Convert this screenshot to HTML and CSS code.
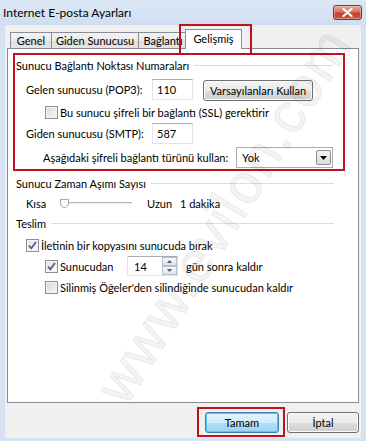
FILE: index.html
```html
<!DOCTYPE html>
<html lang="tr">
<head>
    <meta charset="UTF-8">
    <title>Internet E-posta Ayarları</title>
    <link rel="stylesheet" href="styles.css">
</head>
<body>
    <div class="window">
        <div class="titlebar">
            <span class="title">Internet E-posta Ayarları</span>
            <span class="close">
                <svg width="11" height="9" viewBox="0 0 11 9"><path d="M1.5 1 L9.5 8 M9.5 1 L1.5 8" stroke="#fff" stroke-width="2.2" stroke-linecap="round"/></svg>
            </span>
        </div>

        <div class="client">
            <!-- tab strip -->
            <div class="tabs">
                <div class="tab w-genel">Genel</div>
                <div class="tab w-giden">Giden Sunucusu</div>
                <div class="tab w-baglanti">Bağlantı</div>
                <div class="tab active">Gelişmiş<span class="mark mark-tab"></span></div>
            </div>

            <div class="panel">
                <div class="mark-box">
                    <div class="gtitle in-box"><span>Sunucu Bağlantı Noktası Numaraları</span></div>

                    <div class="row r1">
                        <span class="lbl">Gelen sunucusu (POP3):</span>
                        <span class="field num">110</span>
                        <span class="btn defaults">Varsayılanları Kullan</span>
                    </div>

                    <div class="row r-chk">
                        <span class="chk"></span>
                        <span>Bu sunucu şifreli bir bağlantı (SSL) gerektirir</span>
                    </div>

                    <div class="row r3">
                        <span class="lbl">Giden sunucusu (SMTP):</span>
                        <span class="field num">587</span>
                    </div>

                    <div class="row r4">
                        <span>Aşağıdaki şifreli bağlantı türünü kullan:</span>
                        <span class="combo">
                            <span class="combo-text">Yok</span>
                            <span class="combo-arrow">
                                <svg width="7" height="4" viewBox="0 0 7 4"><path d="M0 0 H7 L3.5 4 Z" fill="#000"/></svg>
                            </span>
                        </span>
                    </div>
                </div>

                <div class="gtitle"><span>Sunucu Zaman Aşımı Sayısı</span></div>
                <div class="row slider-row">
                    <span class="kisa">Kısa</span>
                    <svg class="slider" width="74" height="12" viewBox="0 0 74 12">
                        <path d="M4 5.5 H73" stroke="#b4b4b4" stroke-width="1"/>
                        <path d="M4 6.5 H73" stroke="#eeeeee" stroke-width="1"/>
                        <path d="M1.5 2.5 H9.5 V8 L6.5 10.5 H4.5 L1.5 8 Z" fill="#fafafa" stroke="#a7a7a7" stroke-width="1"/>
                    </svg>
                    <span class="uzun">Uzun</span>
                    <span>1 dakika</span>
                </div>

                <div class="gtitle"><span>Teslim</span></div>
                <div class="row d1">
                    <span class="chk on">
                        <svg width="11" height="11" viewBox="0 0 11 11"><path d="M2 5.5 L4.3 8.3 L9 2" fill="none" stroke="#4d5f8f" stroke-width="1.8"/></svg>
                    </span>
                    <span>İletinin bir kopyasını sunucuda bırak</span>
                </div>
                <div class="row d2">
                    <span class="chk on">
                        <svg width="11" height="11" viewBox="0 0 11 11"><path d="M2 5.5 L4.3 8.3 L9 2" fill="none" stroke="#4d5f8f" stroke-width="1.8"/></svg>
                    </span>
                    <span class="sunucudan">Sunucudan</span>
                    <span class="spin">
                        <span class="spin-text">14</span>
                        <span class="spin-btns">
                            <span class="spin-btn"><svg width="5" height="3" viewBox="0 0 5 3"><path d="M0 3 H5 L2.5 0 Z" fill="#4b5b75"/></svg></span>
                            <span class="spin-btn"><svg width="5" height="3" viewBox="0 0 5 3"><path d="M0 0 H5 L2.5 3 Z" fill="#4b5b75"/></svg></span>
                        </span>
                    </span>
                    <span class="gun">gün sonra kaldır</span>
                </div>
                <div class="row d3">
                    <span class="chk"></span>
                    <span>Silinmiş Öğeler'den silindiğinde sunucudan kaldır</span>
                </div>
            </div>

            <div class="buttons">
                <span class="btn ok">Tamam<span class="mark mark-ok"></span></span>
                <span class="btn cancel">İptal</span>
            </div>
        </div>

        <div class="watermark">www.evilon.com</div>
    </div>
</body>
</html>
```

FILE: styles.css
```css
body {
    margin: 0;
    font-family: Lato, "Noto Sans", sans-serif;
    font-size: 11px;
    color: #000;
}
.window {
    width: 366px;
    height: 441px;
    position: relative;
    overflow: hidden;
    display: flex;
    flex-direction: column;
    background: #d5e2f1;
}
.titlebar {
    height: 25px;
    flex: none;
    display: flex;
    align-items: center;
    justify-content: space-between;
    padding: 0 4px 0 3px;
    background: linear-gradient(#dde8f5, #cfdeef);
}
.title {
    font-size: 12px;
    line-height: 16px;
    margin-top: 1px;
}
.close {
    width: 29px;
    height: 15px;
    margin-top: -1px;
    box-sizing: border-box;
    border: 1px solid #8b2b22;
    border-radius: 3px;
    display: flex;
    align-items: center;
    justify-content: center;
    background: linear-gradient(#e9a99a 0%, #d8715f 45%, #c4402b 55%, #d2563f 100%);
    box-shadow: inset 0 0 0 1px rgba(255, 255, 255, 0.35);
}

/* client area */
.client {
    flex: 1;
    margin: 0 5px 3px;
    padding: 4px 2px 0;
    background: #f0f0f0;
    display: flex;
    flex-direction: column;
}
.tabs {
    display: flex;
    align-items: flex-end;
    height: 20px;
    margin-bottom: -1px;
    padding-left: 3px;
    position: relative;
    z-index: 1;
}
.tab {
    height: 16px;
    margin-bottom: 1px;
    margin-left: -1px;
    box-sizing: border-box;
    border: 1px solid #898c95;
    border-bottom: none;
    background: linear-gradient(#f3f3f3 0%, #ebebeb 50%, #dedede 51%, #e5e5e5 100%);
    display: flex;
    align-items: center;
    justify-content: center;
    line-height: 14px;
    white-space: nowrap;
}
.tab.w-genel { width: 42px; margin-left: 0; }
.tab.w-giden { width: 88px; }
.tab.w-baglanti { width: 50px; }
.tab.active {
    width: 57px;
    height: 20px;
    margin: 0 0 0 -3px;
    background: #fff;
    position: relative;
    align-items: flex-start;
    padding-top: 2px;
}
.mark {
    position: absolute;
    border: 2px solid #c0121b;
    pointer-events: none;
}
.mark-tab { left: -7px; top: -6px; right: -11px; bottom: -6px; }

.panel {
    height: 355px;
    box-sizing: border-box;
    border: 1px solid #898c95;
    background: #fff;
}
.mark-box {
    width: 332px;
    box-sizing: border-box;
    margin: 4px 0 0 5px;
    padding: 0 0 1px;
    border: 2px solid #c0121b;
}

/* group titles with etched line */
.gtitle {
    height: 16px;
    display: flex;
    align-items: center;
    margin-top: 4px;
    padding: 0 24px 0 8px;
}
.gtitle.in-box {
    margin-top: 2px;
    padding: 0 10px 0 1px;
}
.gtitle::after {
    content: "";
    flex: 1;
    height: 1px;
    margin-left: 5px;
    background: #d5dfe5;
}

.row {
    display: flex;
    align-items: center;
    white-space: nowrap;
}
.lbl { width: 126px; }
.r1 { height: 21px; margin-top: 6px; padding-left: 11px; }
.r-chk { height: 16px; margin-top: 4px; padding-left: 30px; }
.r3 { height: 21px; margin-top: 3px; padding-left: 11px; }
.r4 { height: 21px; margin-top: 3px; padding: 0 10px 0 28px; }

.field {
    height: 21px;
    box-sizing: border-box;
    border: 1px solid #e2e3ea;
    border-top-color: #abadb3;
    background: #fff;
    display: flex;
    align-items: center;
}
.num {
    width: 41px;
    padding-left: 4px;
}

.btn {
    height: 21px;
    box-sizing: border-box;
    border: 1px solid #707070;
    border-radius: 3px;
    background: linear-gradient(#f2f2f2 0%, #ebebeb 50%, #dddddd 51%, #cfcfcf 100%);
    box-shadow: inset 0 0 0 1px #fbfbfb;
    display: flex;
    align-items: center;
    justify-content: center;
}
.defaults {
    width: 110px;
    margin-left: 10px;
    margin-top: 1px;
}

.combo {
    width: 97px;
    height: 21px;
    margin-left: auto;
    box-sizing: border-box;
    border: 1px solid #abadb3;
    background: #fff;
    display: flex;
    align-items: center;
    justify-content: space-between;
    padding: 0 1px 0 5px;
}
.combo-arrow {
    width: 15px;
    height: 15px;
    box-sizing: border-box;
    border: 1px solid #8d8d8d;
    border-radius: 2px;
    background: linear-gradient(#f4f4f4, #dcdcdc);
    display: flex;
    align-items: center;
    justify-content: center;
}

.chk {
    width: 13px;
    height: 13px;
    flex: none;
    box-sizing: border-box;
    margin-right: 2px;
    border: 1px solid #8e8f8f;
    background: linear-gradient(135deg, #d6d6d6, #fafafa);
    box-shadow: inset 0 0 0 1px #f4f4f4;
    display: flex;
    align-items: center;
    justify-content: center;
}
.chk.on {
    background: linear-gradient(135deg, #e2e2e2, #fbfbfb);
}

.slider-row { height: 16px; margin-top: 4px; padding-left: 18px; }
.kisa { width: 33px; }
.uzun { width: 33px; margin-left: 14px; }

.d1 { height: 16px; margin-top: 6px; padding-left: 18px; }
.d2 { height: 20px; margin-top: 3px; padding-left: 37px; }
.d3 { height: 16px; margin-top: 3px; padding-left: 37px; }
.sunucudan { width: 67px; }

.spin {
    width: 51px;
    height: 20px;
    box-sizing: border-box;
    border: 1px solid #e2e3ea;
    border-top-color: #abadb3;
    display: flex;
    align-items: center;
    justify-content: space-between;
    padding-left: 6px;
}
.spin-btns {
    display: flex;
    flex-direction: column;
    width: 15px;
    height: 18px;
}
.spin-btn {
    flex: 1;
    box-sizing: border-box;
    border: 1px solid #b5bfcc;
    background: linear-gradient(#f6f8fb, #dde4ec);
    display: flex;
    align-items: center;
    justify-content: center;
}
.gun { margin-left: 8px; }

.buttons {
    display: flex;
    justify-content: flex-end;
    gap: 8px;
    margin-top: 9px;
}
.ok {
    width: 74px;
    position: relative;
    border-color: #3c7fb1;
    background: linear-gradient(#e5f5fd 0%, #d2ecfb 50%, #b3dff7 51%, #9bd3f3 100%);
    box-shadow: inset 0 0 0 1px #59c7f5;
}
.cancel { width: 72px; }
.mark-ok { left: -9px; top: -6px; right: -7px; bottom: -5px; }

/* faint diagonal watermark over the dialog */
.watermark {
    position: absolute;
    left: 8px;
    top: 187px;
    width: 432px;
    text-align: center;
    font-family: "Liberation Sans", sans-serif;
    font-size: 56px;
    letter-spacing: 2px;
    line-height: 56px;
    color: rgba(0, 0, 0, 0.045);
    -webkit-text-stroke: 1px rgba(0, 0, 0, 0.07);
    transform: rotate(-58deg);
    pointer-events: none;
}
```
